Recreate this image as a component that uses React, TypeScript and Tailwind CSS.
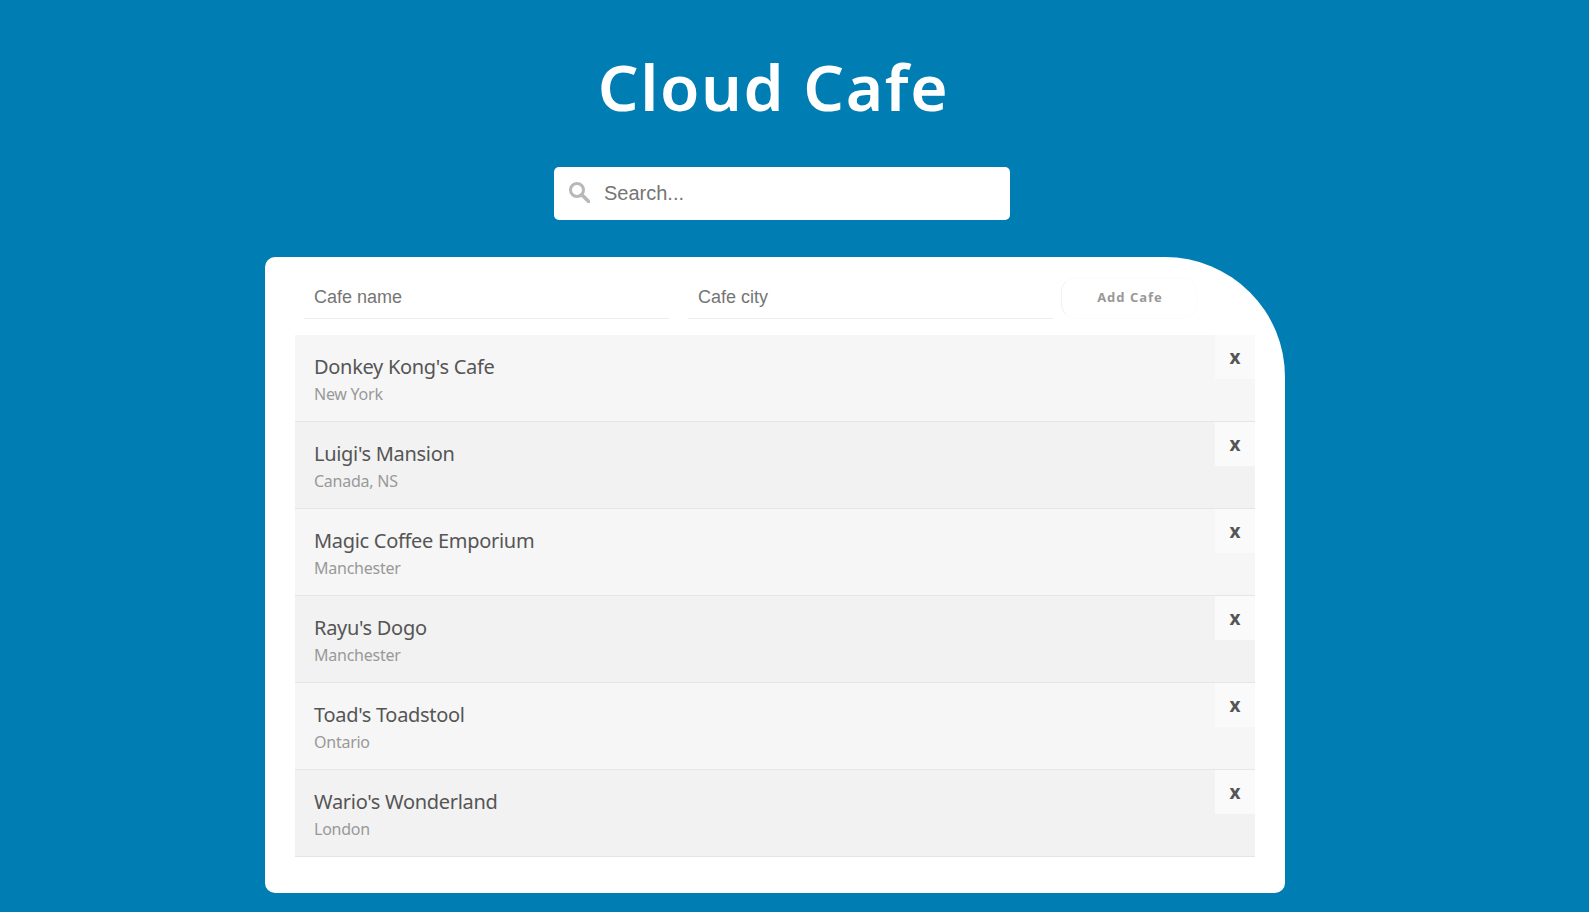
import React from 'react';

const cafes = [
  { name: "Donkey Kong's Cafe", city: 'New York' },
  { name: "Luigi's Mansion", city: 'Canada, NS' },
  { name: 'Magic Coffee Emporium', city: 'Manchester' },
  { name: "Rayu's Dogo", city: 'Manchester' },
  { name: "Toad's Toadstool", city: 'Ontario' },
  { name: "Wario's Wonderland", city: 'London' },
];

const ubuntu = 'font-["Noto_Sans",sans-serif]';
const arial = 'font-["Liberation_Sans",Arial,sans-serif]';

const App: React.FC = () => {
  return (
    <div className="min-h-[912px] bg-[#007eb3] overflow-hidden">
      <div className="w-[1550px] flex flex-col items-center">
        {/* Title */}
        <h1 className={`${ubuntu} mt-[47px] mr-[3px] text-[64px] leading-[80px] font-semibold text-white tracking-[1.6px]`}>
          Cloud Cafe
        </h1>

        {/* Search */}
        <div className="mt-[40px] ml-[14px] w-[456px] h-[53px] bg-white rounded-[5px] flex items-center pl-[15px] gap-[14px]">
          <svg viewBox="0 0 21 21" fill="none" stroke="#b8b8b8" className="w-[21px] h-[21px] shrink-0 -mt-[2px]">
            <circle cx="8" cy="8" r="6.5" strokeWidth="3" />
            <path d="M12.8 12.8 L19.6 19.6" strokeWidth="3.6" strokeLinecap="round" />
          </svg>
          <input
            placeholder="Search..."
            className={`${arial} flex-1 min-w-0 pb-[2px] text-[20px] text-[#555] placeholder:text-[#757575] outline-none bg-transparent`}
          />
        </div>

        {/* Card */}
        <div className="mt-[37px] w-[1020px] h-[636px] bg-white rounded-[10px] rounded-tr-[120px] px-[30px] pt-[20px]">
          <form className="flex h-[58px] items-start pl-[9px]">
            <input
              placeholder="Cafe name"
              className={`${arial} w-[365px] h-[42px] border-b border-[#eeeeee] px-[10px] text-[18px] placeholder:text-[#757575] outline-none`}
            />
            <input
              placeholder="Cafe city"
              className={`${arial} ml-[19px] w-[365px] h-[42px] border-b border-[#eeeeee] px-[10px] text-[18px] placeholder:text-[#757575] outline-none`}
            />
            <button
              type="button"
              className={`${ubuntu} ml-[8px] w-[136px] h-[42px] pl-[2px] border border-[#fbfbfb] border-l-[#f2f2f2] rounded-[15px] text-[13px] font-bold tracking-[1px] text-[#999999]`}
            >
              Add Cafe
            </button>
          </form>

          <ul>
            {cafes.map((cafe, i) => (
              <li
                key={cafe.name}
                className={`relative h-[87px] border-b border-[#e6e6e6] pl-[19px] pt-[19px] ${ubuntu} ${i % 2 === 0 ? 'bg-[#f6f6f6]' : 'bg-[#f2f2f2]'}`}
              >
                <div className="text-[20px] leading-[26px] tracking-[-0.3px] text-[#555555]">{cafe.name}</div>
                <div className="mt-[4px] text-[16px] leading-[20px] tracking-[-0.25px] text-[#999999]">{cafe.city}</div>
                <div className="absolute top-0 right-0 w-[40px] h-[44px] bg-[#fafafa] flex items-center justify-center text-[19px] font-bold text-[#555555]">
                  x
                </div>
              </li>
            ))}
          </ul>
        </div>
      </div>
    </div>
  );
};

export default App;
